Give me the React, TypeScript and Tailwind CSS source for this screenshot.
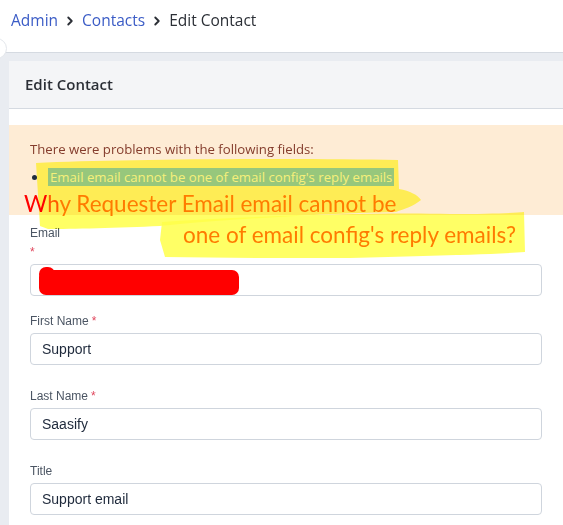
import React from 'react';

const Chevron: React.FC = () => (
  <svg width="14" height="14" viewBox="0 0 24 24" fill="none" stroke="#2b2f36" strokeWidth="3.2" strokeLinecap="round" strokeLinejoin="round" className="mx-[5px]">
    <path d="M9 6l6 6-6 6" />
  </svg>
);

const Field: React.FC<{ label: string; value?: string; required?: boolean }> = ({ label, value, required }) => (
  <div className="mb-[24px]">
    <div className="h-[15px] leading-[15px] mb-[4px] text-[12px] text-[#4b5563]">
      {label}
      {required && <span className="text-[#e0475d] ml-[3px]">*</span>}
    </div>
    <div className="h-[32px] border border-[#cfd5dd] rounded-[4px] bg-white flex items-center px-[11px] text-[14px] text-[#1e293b]">
      {value}
    </div>
  </div>
);

const App: React.FC = () => {
  return (
    <div className="relative w-[563px] h-[525px] overflow-hidden bg-white" style={{ fontFamily: '"Open Sans", sans-serif' }}>
      {/* Breadcrumb */}
      <div className="h-[52px] pl-[11px] pt-[9px] flex items-start text-[15.5px]">
        <div className="flex items-center h-[24px]">
          <span className="text-[#3b5cc6]">Admin</span>
          <Chevron />
          <span className="text-[#3b5cc6]">Contacts</span>
          <Chevron />
          <span className="text-[#2b2f36]">Edit Contact</span>
        </div>
      </div>

      {/* sidebar toggle peeking in */}
      <div className="absolute left-[-14px] top-[38px] w-[21px] h-[21px] rounded-full bg-white border border-[#e3e6eb]" />

      <div className="border-t border-[#d5dae1] bg-[#e9ecf1] pl-[9px] pt-[8px] h-[473px]">
        <div className="bg-white h-full">
          <div className="h-[48px] bg-[#f4f5f7] border-b border-[#d5dae1] flex items-center pl-[16px] text-[15px] font-semibold text-[#2b2f36]">
            Edit Contact
          </div>

          <div className="pt-[16px]">
            <div className="h-[90px] bg-[#feecd5] pl-[21px] pt-[14px] text-[13.2px] text-[#843c2c]">
              <div className="leading-[20px]">There were problems with the following fields:</div>
              <div className="flex items-center mt-[9px] leading-[18px]">
                <span className="w-[5px] h-[5px] rounded-full bg-[#1f2d3d] ml-[2px] mr-[11px]" />
                <span className="relative z-10 bg-[#97c77c] text-[#f6f07a] px-[2px]">Email email cannot be one of email config's reply emails</span>
              </div>
            </div>

            <div className="px-[21px] pt-[11px]" style={{ fontFamily: '"Liberation Sans", Arial, sans-serif' }}>
              <div className="mb-[18px]">
                <div className="h-[15px] leading-[15px] text-[12px] text-[#4b5563]">Email</div>
                <div className="h-[15px] leading-[15px] mt-[4px] mb-[4px] text-[12px] text-[#e0475d]">*</div>
                <div className="relative h-[32px] border border-[#cfd5dd] rounded-[4px] bg-white">
                  <div className="absolute left-[8px] top-[5px] w-[200px] h-[25px] bg-[#ff0000] rounded-[7px]" />
                  <div className="absolute left-[8px] top-[2px] w-[16px] h-[14px] bg-[#ff0000] rounded-full" />
                </div>
              </div>
              <Field label="First Name" value="Support" required />
              <Field label="Last Name" value="Saasify" required />
              <Field label="Title" value="Support email" />
            </div>
          </div>
        </div>
      </div>

      {/* highlighter annotation */}
      <svg className="absolute left-0 top-0 pointer-events-none" width="563" height="525" style={{ mixBlendMode: 'multiply' }}>
        <path d="M36 163 C120 159 300 158 398 160 L399 189 C410 191 418 195 421 200 C414 206 404 209 396 212 C300 214 200 222 160 226 C120 228 70 229 48 229 L40 226 Z" fill="#ffff4a" opacity="0.85" />
        <path d="M162 222 C250 216 380 212 450 214 C490 214 515 213 524 212 L525 252 C480 255 420 256 350 258 C280 258 220 258 165 257 L160 240 Z" fill="#ffff4a" opacity="0.85" />
      </svg>
      <div className="absolute left-[24px] top-[189px] text-[22.5px] leading-[30px] text-[#ff7b00] pointer-events-none" style={{ fontFamily: 'Lato, sans-serif' }}>
        <div><span className="text-[#ff0000]">W</span><span className="text-[#ff5a00]">h</span>y Requester Email email cannot be</div>
        <div className="pl-[159px] mt-[1px]">one of email config's reply emails?</div>
      </div>
    </div>
  );
};

export default App;
